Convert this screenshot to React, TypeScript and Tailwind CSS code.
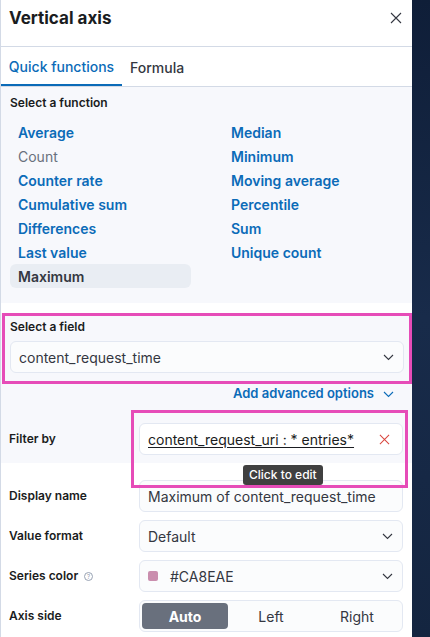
import React from "react";

const font = { fontFamily: "Inter, 'Noto Sans', sans-serif" };

const leftFns = ["Average", "Count", "Counter rate", "Cumulative sum", "Differences", "Last value", "Maximum"];
const rightFns = ["Median", "Minimum", "Moving average", "Percentile", "Sum", "Unique count"];

const Chevron = ({ className = "" }: { className?: string }) => (
  <svg width="11" height="7" viewBox="0 0 11 7" className={className} fill="none">
    <path d="M1 1l4.5 4.5L10 1" stroke="currentColor" strokeWidth="1.1" />
  </svg>
);

const Cross = ({ className = "", size = 12 }: { className?: string; size?: number }) => (
  <svg width={size} height={size} viewBox="0 0 12 12" className={className} fill="none">
    <path d="M1 1l10 10M11 1L1 11" stroke="currentColor" strokeWidth="1.1" />
  </svg>
);

const FnItem = ({ label }: { label: string }) => {
  if (label === "Maximum") {
    return (
      <div className="flex h-[24px] w-[181px] items-center rounded-md bg-[#e9edf3] px-[8px] text-[14px] font-semibold text-[#343741]">
        {label}
      </div>
    );
  }
  const muted = label === "Count";
  return (
    <div
      className={`flex h-[24px] items-center px-[8px] text-[14px] ${
        muted ? "font-normal text-[#69707d]" : "font-semibold text-[#0b6bb8]"
      }`}
    >
      {label}
    </div>
  );
};

const Row = ({ label, children }: { label: React.ReactNode; children: React.ReactNode }) => (
  <div className="flex h-[32px] items-center">
    <div className="w-[138px] pl-[8px] text-[12px] font-semibold text-[#1a1c21]">{label}</div>
    <div className="w-[264px]">{children}</div>
  </div>
);

const Box = ({ children }: { children: React.ReactNode }) => (
  <div className="flex h-[32px] items-center justify-between rounded-md border border-[#e3e8f2] bg-[#fbfcfd] pl-[8px] pr-[9px] text-[14px] text-[#343741]">
    {children}
  </div>
);

export default function App() {
  return (
    <div className="flex h-[637px] w-[430px] overflow-hidden" style={font}>
      <div className="flex w-[412px] flex-col border-l border-[#d3dae6] bg-white">
        {/* header */}
        <div className="flex h-[47px] items-start justify-between border-b border-[#d3dae6] pl-[8px] pr-[10px] pt-[6px]">
          <div className="text-[17px] font-bold leading-[24px] text-[#1a1c21]">Vertical axis</div>
          <Cross className="mt-[6px] text-[#343741]" size={12} />
        </div>

        {/* tabs */}
        <div className="flex h-[40px] border-b border-[#d3dae6]">
          <div className="flex w-[121px] items-center justify-center border-b-2 border-[#0b6bb8] pt-[2px] text-[14px] font-medium text-[#0b6bb8]">
            Quick functions
          </div>
          <div className="flex items-center px-[8px] pt-[2px] text-[14px] font-medium text-[#343741]">Formula</div>
        </div>

        {/* functions */}
        <div className="h-[216px] bg-[#f7f8fc] pl-[9px] pt-[8px]">
          <div className="text-[12px] font-semibold leading-[16px] text-[#1a1c21]">Select a function</div>
          <div className="mt-[9px] flex">
            <div className="flex w-[213px] flex-col">
              {leftFns.map((f) => (
                <FnItem key={f} label={f} />
              ))}
            </div>
            <div className="flex flex-col">
              {rightFns.map((f) => (
                <FnItem key={f} label={f} />
              ))}
            </div>
          </div>
        </div>

        <div className="h-[10px] bg-white" />

        {/* field section */}
        <div className="relative bg-[#f7f8fc]">
          <div className="ml-[1px] w-[410px] border-[3px] border-[#e64cb8] px-[5px] pb-[8px] pt-[3px]">
            <div className="text-[12px] font-semibold leading-[16px] text-[#1a1c21]">Select a field</div>
            <div className="mt-[6px] w-[394px]">
              <Box>
                <span>content_request_time</span>
                <Chevron className="text-[#343741]" />
              </Box>
            </div>
          </div>

          <div className="flex h-[20px] items-center justify-end gap-[9px] pr-[18px]">
            <span className="text-[13px] font-semibold text-[#0b6bb8]">Add advanced options</span>
            <Chevron className="text-[#0b6bb8]" />
          </div>

          <div className="pb-[8px] pt-[19px]">
            <Row label="Filter by">
              <div className="flex h-[32px] items-center justify-between rounded-md border border-[#e3e8f2] bg-white pl-[8px] pr-[12px] text-[14px] text-[#1a1c21]">
                <span className="underline underline-offset-2">content_request_uri : * entries*</span>
                <Cross className="text-[#d9453d]" size={11} />
              </div>
            </Row>
          </div>

          {/* annotation box */}
          <div className="absolute left-[130px] top-[97px] h-[78px] w-[277px] border-[3px] border-[#e64cb8]" />
          {/* tooltip */}
          <div className="absolute left-[242px] top-[152px] z-10 rounded-[3px] bg-[#404040] px-[6px] py-[1px] text-[12px] font-medium text-white">
            Click to edit
          </div>
        </div>

        {/* form rows */}
        <div className="flex flex-col gap-[8px] pt-[17px]">
          <Row label="Display name">
            <Box>
              <span>Maximum of content_request_time</span>
            </Box>
          </Row>
          <Row label="Value format">
            <Box>
              <span>Default</span>
              <Chevron className="text-[#343741]" />
            </Box>
          </Row>
          <Row
            label={
              <span className="flex items-center gap-[6px]">
                Series color
                <span className="flex h-[9px] w-[9px] items-center justify-center rounded-full border border-[#98a2b3] text-[6px] font-normal text-[#98a2b3]">
                  ?
                </span>
              </span>
            }
          >
            <Box>
              <span className="flex items-center gap-[12px]">
                <span className="h-[10px] w-[10px] rounded-[2px] bg-[#ca8eae]" />
                #CA8EAE
              </span>
              <Chevron className="text-[#343741]" />
            </Box>
          </Row>
          <Row label="Axis side">
            <div className="flex h-[32px] items-center rounded-md border border-[#e3e8f2] bg-[#fbfcfd] px-[2px]">
              <div className="flex h-[26px] flex-1 items-center justify-center rounded-[4px] bg-[#69707d] text-[14px] font-bold text-white">
                Auto
              </div>
              <div className="flex h-[26px] flex-1 items-center justify-center text-[14px] text-[#343741]">Left</div>
              <div className="flex h-[26px] flex-1 items-center justify-center text-[14px] text-[#343741]">Right</div>
            </div>
          </Row>
        </div>
      </div>
      <div className="flex-1 bg-gradient-to-b from-[#0f1e38] via-[#182b4a] to-[#142540]" />
    </div>
  );
}
